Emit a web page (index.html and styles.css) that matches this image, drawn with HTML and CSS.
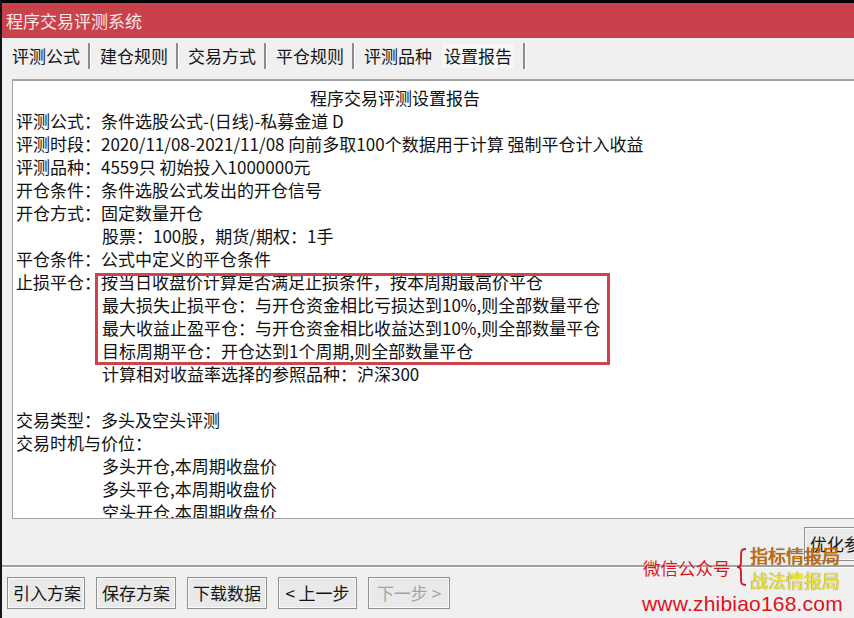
FILE: index.html
```html
<!DOCTYPE html>
<html lang="zh">
<head>
<meta charset="utf-8">
<title>程序交易评测系统</title>
<link rel="stylesheet" href="styles.css">
</head>
<body>
<div class="window">
  <div class="titlebar">程序交易评测系统</div>
  <div class="tabbar">
    <span class="tab">评测公式</span><span class="sep"></span>
    <span class="tab">建仓规则</span><span class="sep"></span>
    <span class="tab">交易方式</span><span class="sep"></span>
    <span class="tab">平仓规则</span><span class="sep"></span>
    <span class="tab">评测品种</span>
    <span class="tab active">设置报告</span><span class="sep"></span>
  </div>
  <div class="panel">
    <div class="line title">程序交易评测设置报告</div>
    <div class="line">评测公式：条件选股公式-(日线)-私募金道 D</div>
    <div class="line">评测时段：2020/11/08-2021/11/08 向前多取100个数据用于计算 强制平仓计入收益</div>
    <div class="line">评测品种：4559只 初始投入1000000元</div>
    <div class="line">开仓条件：条件选股公式发出的开仓信号</div>
    <div class="line">开仓方式：固定数量开仓</div>
    <div class="line indent">股票：100股，期货/期权：1手</div>
    <div class="line">平仓条件：公式中定义的平仓条件</div>
    <div class="line">止损平仓：按当日收盘价计算是否满足止损条件，按本周期最高价平仓</div>
    <div class="line indent">最大损失止损平仓：与开仓资金相比亏损达到10%,则全部数量平仓</div>
    <div class="line indent">最大收益止盈平仓：与开仓资金相比收益达到10%,则全部数量平仓</div>
    <div class="line indent">目标周期平仓：开仓达到1个周期,则全部数量平仓</div>
    <div class="line indent">计算相对收益率选择的参照品种：沪深300</div>
    <div class="line">&nbsp;</div>
    <div class="line">交易类型：多头及空头评测</div>
    <div class="line">交易时机与价位：</div>
    <div class="line indent">多头开仓,本周期收盘价</div>
    <div class="line indent">多头平仓,本周期收盘价</div>
    <div class="line indent">空头开仓,本周期收盘价</div>
    <div class="highlight"></div>
  </div>
  <div class="midbar">
    <button class="btn optimize">优化参数</button>
  </div>
  <div class="divider"></div>
  <div class="buttons">
    <button class="btn">引入方案</button>
    <button class="btn">保存方案</button>
    <button class="btn">下载数据</button>
    <button class="btn">&lt;&nbsp;上一步</button>
    <button class="btn disabled">下一步&nbsp;&gt;</button>
  </div>
  <div class="watermark">
    <span class="wx">微信公众号</span>
    <svg class="brace" width="12" height="40" viewBox="0 0 12 40"><path d="M10 2 C5 2 5 4 5 9 L5 16 C5 19 4 20 1 20 C4 20 5 21 5 24 L5 31 C5 36 5 38 10 38" fill="none" stroke="#d81420" stroke-width="1.8"/></svg>
    <span class="names"><span class="n1">指标情报局</span><span class="n2">战法情报局</span></span>
    <span class="url">www.zhibiao168.com</span>
  </div>
</div>
</body>
</html>
```
FILE: styles.css
```css
* { box-sizing: border-box; }
html, body { margin: 0; padding: 0; }
body {
  width: 854px;
  height: 618px;
  overflow: hidden;
  background: #f0f0f0;
  font-family: "Noto Sans CJK SC", "Liberation Sans", sans-serif;
  color: #111;
}
.window {
  position: relative;
  width: 854px;
  height: 618px;
  border-top: 3px solid #050505;
  border-left: 2px solid #151515;
  background: #f0f0f0;
}
.titlebar {
  height: 35px;
  line-height: 35px;
  background: #c9424b;
  color: #fbe6e6;
  font-size: 17px;
  padding-left: 4px;
}
.tabbar {
  height: 34px;
  padding: 2px 0 0 10px;
  display: flex;
  align-items: center;
  font-size: 17px;
  line-height: 24px;
}
.tab { color: #151515; }
.sep {
  width: 3px;
  height: 26px;
  margin: 0 9px 0 8px;
  border-left: 2px solid #8c8c8c;
  border-right: 1px solid #fff;
}
.tab.active {
  margin-left: 10px;
  padding: 0 2px;
  background: #f6f6f6;
}
.tab.active + .sep { margin-left: 9px; }
.panel {
  position: relative;
  margin: 7px 0 0 10px;
  height: 440px;
  background: #fff;
  border-top: 2px solid #a3a3a3;
  border-left: 1px solid #a3a3a3;
  border-bottom: 1px solid #a3a3a3;
  padding: 5px 0 0 3px;
  overflow: hidden;
  font-size: 17px;
}
.line {
  height: 23px;
  line-height: 23px;
  white-space: nowrap;
}
.line.title { padding-left: 294px; }
.line.indent { padding-left: 86px; }
.highlight {
  position: absolute;
  left: 82px;
  top: 192px;
  width: 515px;
  height: 92px;
  border: 3px solid #d0434b;
}
.midbar {
  height: 46px;
  display: flex;
  justify-content: flex-end;
  align-items: flex-start;
  padding-top: 8px;
}
.btn {
  font-family: "Noto Sans CJK SC", "Liberation Sans", sans-serif;
  font-size: 17px;
  line-height: 26px;
  height: 32px;
  padding: 0 5px;
  background: #e9e9e9;
  border: 1px solid #8f8f8f;
  box-shadow: inset 0 0 0 1px #fafafa;
  color: #151515;
  white-space: nowrap;
}
.btn.optimize {
  margin-right: -30px;
  width: 80px;
  height: 34px;
  text-align: left;
}
.btn.disabled { color: #a3a3a3; }
.divider {
  height: 3px;
  border-top: 2px solid #a0a0a0;
  border-bottom: 1px solid #ffffff;
}
.buttons {
  display: flex;
  gap: 11px;
  padding: 9px 0 0 5px;
}
.buttons .btn:nth-child(1) { width: 78px; }
.buttons .btn:nth-child(2) { width: 80px; }
.buttons .btn:nth-child(3) { width: 80px; }
.buttons .btn:nth-child(4) { width: 79px; }
.buttons .btn:nth-child(5) { width: 82px; }
.watermark {
  position: absolute;
  left: 640px;
  top: 540px;
  width: 214px;
  height: 78px;
}
.wx {
  position: absolute;
  left: 1px;
  top: 13px;
  font-size: 17.5px;
  line-height: 24px;
  color: #d81420;
  text-shadow: 0 0 1px #fff;
}
.brace {
  position: absolute;
  left: 94px;
  top: 4px;
}
.names {
  position: absolute;
  left: 108px;
  top: 0;
  display: flex;
  flex-direction: column;
  font-size: 18px;
  line-height: 25px;
}
.n1 { color: #c86a00; text-shadow: 0 0 1px #6a3000; }
.n2 { color: #ece43a; text-shadow: 0 0 1px #7a6a00; }
.url {
  position: absolute;
  left: 0;
  top: 48px;
  font-family: "Liberation Sans", sans-serif;
  font-size: 21px;
  line-height: 26px;
  color: #e0101c;
  letter-spacing: 0.2px;
}
```
